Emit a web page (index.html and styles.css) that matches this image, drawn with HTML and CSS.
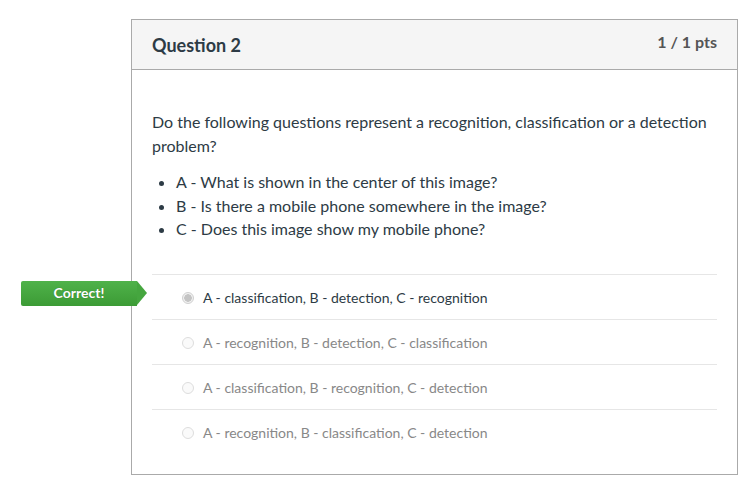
FILE: index.html
```html
<!DOCTYPE html>
<html>
<head>
<meta charset="utf-8">
<link rel="stylesheet" href="styles.css">
</head>
<body>
<div class="card">
  <div class="card-header">
    <h2 class="title">Question 2</h2>
    <div class="pts">1 / 1 pts</div>
  </div>
  <div class="card-body">
    <p class="question">Do the following questions represent a recognition, classification or a detection problem?</p>
    <ul class="items">
      <li>A - What is shown in the center of this image?</li>
      <li>B - Is there a mobile phone somewhere in the image?</li>
      <li>C - Does this image show my mobile phone?</li>
    </ul>
    <div class="answers">
      <div class="answer selected">
        <div class="badge">Correct!</div>
        <span class="radio checked"></span>
        <span class="label">A - classification, B - detection, C - recognition</span>
      </div>
      <div class="answer">
        <span class="radio"></span>
        <span class="label">A - recognition, B - detection, C - classification</span>
      </div>
      <div class="answer">
        <span class="radio"></span>
        <span class="label">A - classification, B - recognition, C - detection</span>
      </div>
      <div class="answer">
        <span class="radio"></span>
        <span class="label">A - recognition, B - classification, C - detection</span>
      </div>
    </div>
  </div>
</div>
</body>
</html>
```
FILE: styles.css
```css
html, body {
  margin: 0;
  padding: 0;
  background: #fff;
  font-family: Lato, "Open Sans", sans-serif;
  color: #2d3b45;
}
.card {
  box-sizing: border-box;
  width: 607px;
  margin: 19px 0 0 131px;
  border: 1px solid #aaa;
  background: #fff;
}
.card-header {
  display: flex;
  justify-content: space-between;
  align-items: flex-start;
  height: 50px;
  box-sizing: border-box;
  padding: 0 20px;
  background: #f5f5f5;
  border-bottom: 1px solid #aaa;
}
.title {
  margin: 0;
  padding-top: 14px;
  font-size: 18px;
  font-weight: 700;
  line-height: 22px;
  color: #2d3b45;
}
.pts {
  padding-top: 12px;
  font-size: 16px;
  font-weight: 700;
  line-height: 20px;
  color: #555;
}
.card-body {
  padding: 40px 20px 20px 20px;
}
.question {
  margin: 0 0 12px 0;
  font-size: 16px;
  line-height: 24px;
  color: #2d3b45;
}
.items {
  margin: 0 0 33px 0;
  padding-left: 24px;
  font-size: 16px;
  line-height: 23.5px;
}
.answers {
  display: flex;
  flex-direction: column;
}
.answer {
  position: relative;
  display: flex;
  align-items: center;
  height: 45px;
  box-sizing: border-box;
  border-top: 1px solid #e6e6e6;
  padding-left: 30px;
  font-size: 14px;
  color: #888;
}
.answer.selected {
  color: #2d3b45;
}
.radio {
  box-sizing: border-box;
  width: 12px;
  height: 12px;
  border-radius: 50%;
  border: 1px solid #ddd;
  background: #fafafa;
  margin-right: 9px;
  margin-top: 2px;
}
.radio.checked {
  border-color: #d0d0d0;
  background: radial-gradient(circle, #c4c4c4 0 3.5px, #f0f0f0 4px);
}
.label {
  line-height: 20px;
  padding-top: 2px;
}
.badge {
  position: absolute;
  left: -131px;
  top: 6px;
  width: 116px;
  height: 25px;
  box-sizing: border-box;
  background: linear-gradient(#4fb24a, #3c9b35);
  color: #fff;
  font-size: 14px;
  font-weight: 700;
  line-height: 23px;
  text-align: center;
  border-radius: 2px 0 0 2px;
  text-shadow: 0 0 1px rgba(0,0,0,0.3);
}
.badge::after {
  content: "";
  position: absolute;
  right: -10px;
  top: 0;
  border-top: 12.5px solid transparent;
  border-bottom: 12.5px solid transparent;
  border-left: 10px solid #45a63f;
}
```
